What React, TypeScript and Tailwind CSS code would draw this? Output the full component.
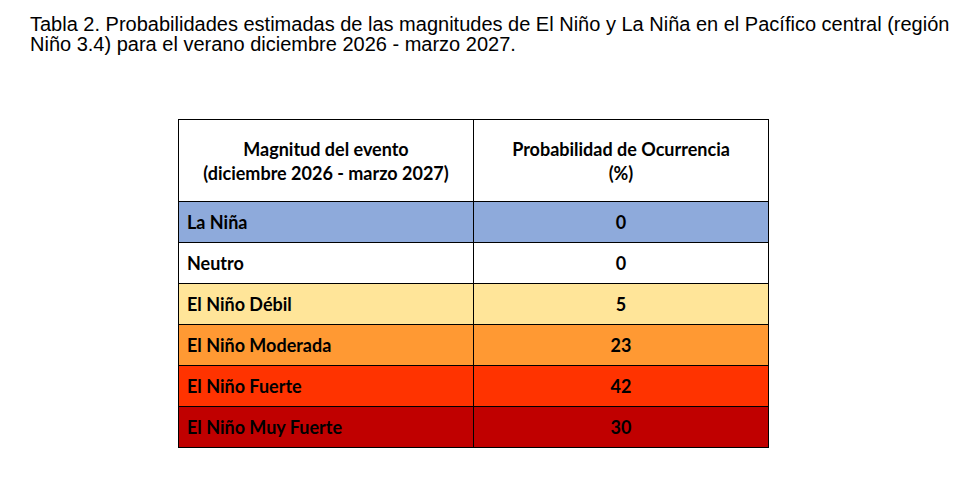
const rows = [
  { label: 'La Niña', value: '0', bg: 'bg-[#8eaadb]' },
  { label: 'Neutro', value: '0', bg: 'bg-white' },
  { label: 'El Niño Débil', value: '5', bg: 'bg-[#ffe599]' },
  { label: 'El Niño Moderada', value: '23', bg: 'bg-[#ff9933]' },
  { label: 'El Niño Fuerte', value: '42', bg: 'bg-[#ff3300]' },
  { label: 'El Niño Muy Fuerte', value: '30', bg: 'bg-[#c00000]' },
]

export default function App() {
  return (
    <div className="w-[966px] h-[487px] bg-white text-black">
      <p className="pl-[30px] pt-[14px] text-[20px] leading-[20px] font-['Liberation_Sans',Arial,sans-serif] whitespace-nowrap">
        Tabla 2. Probabilidades estimadas de las magnitudes de El Niño y La Niña en el Pacífico central (región
        <br />
        Niño 3.4) para el verano diciembre 2026 - marzo 2027.
      </p>

      <table className="ml-[178px] mt-[65px] w-[591px] border-collapse font-['Lato',sans-serif] font-bold text-[18px] text-black">
        <thead>
          <tr className="h-[82px]">
            <th className="w-[295px] border-[1.5px] border-black text-center leading-[24px] font-bold">
              Magnitud del evento
              <br />
              (diciembre 2026 - marzo 2027)
            </th>
            <th className="border-[1.5px] border-black text-center leading-[24px] font-bold">
              Probabilidad de Ocurrencia
              <br />
              (%)
            </th>
          </tr>
        </thead>
        <tbody>
          {rows.map((r) => (
            <tr key={r.label} className={`h-[41px] ${r.bg}`}>
              <td className="border-[1.5px] border-black pl-[8px] text-left">{r.label}</td>
              <td className="border-[1.5px] border-black text-center">{r.value}</td>
            </tr>
          ))}
        </tbody>
      </table>
    </div>
  )
}
